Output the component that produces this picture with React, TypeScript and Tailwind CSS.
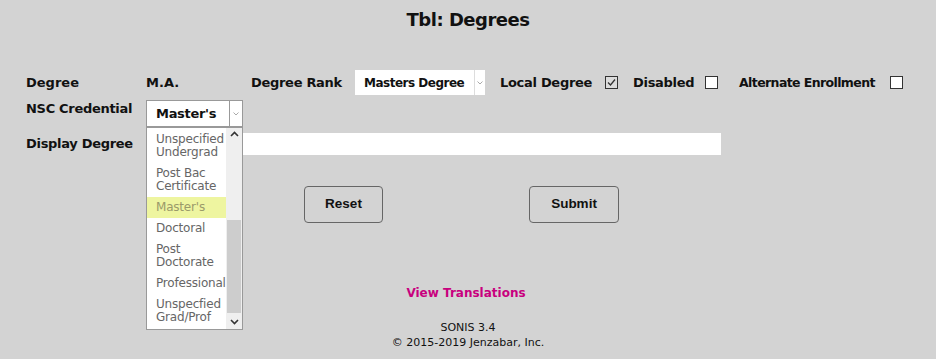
import React from "react";

const font = { fontFamily: '"DejaVu Sans", "Liberation Sans", sans-serif' };

function Check({ checked }: { checked?: boolean }) {
  return (
    <span className={`inline-flex h-[13px] w-[13px] shrink-0 items-center justify-center border border-[#333] ${checked ? "bg-[#dcdcdc]" : "bg-white"}`}>
      {checked && (
        <svg width="11" height="11" viewBox="0 0 11 11">
          <path d="M2 5.5 L4.5 8 L9 2.5" fill="none" stroke="#333" strokeWidth="1.3" />
        </svg>
      )}
    </span>
  );
}

function Chev({ up }: { up?: boolean }) {
  return (
    <svg width="9" height="6" viewBox="0 0 9 6">
      <path d={up ? "M1 5 L4.5 1.5 L8 5" : "M1 1 L4.5 4.5 L8 1"} fill="none" stroke="#333" strokeWidth="1.6" />
    </svg>
  );
}

const items: { t: string[]; hi?: boolean }[] = [
  { t: ["Unspecified", "Undergrad"] },
  { t: ["Post Bac", "Certificate"] },
  { t: ["Master's"], hi: true },
  { t: ["Doctoral"] },
  { t: ["Post", "Doctorate"] },
  { t: ["Professional"] },
  { t: ["Unspecfied", "Grad/Prof"] },
];

export default function App() {
  return (
    <div className="relative h-[359px] w-[936px] overflow-hidden whitespace-nowrap bg-[#d3d3d3] text-[#111]" style={font}>
      <div className="flex h-[37px] items-center justify-center pt-[1px] text-[18px] font-bold tracking-[-0.5px]">Tbl: Degrees</div>

      <div className="mt-[33px] flex h-[25px] items-center text-[13px] font-bold">
        <span className="ml-[26px] w-[120px] shrink-0">Degree</span>
        <span className="w-[105px] shrink-0">M.A.</span>
        <span className="w-[104px] shrink-0 tracking-[-0.3px]">Degree Rank</span>
        <div className="flex h-[25px] w-[130px] shrink-0 items-stretch bg-white">
          <span className="flex flex-1 items-center overflow-hidden pl-[9px] text-[12px] tracking-[-0.5px]">Masters Degree</span>
          <span className="flex w-[11px] items-center justify-center border-l border-[#ddd]">
            <svg width="6" height="4" viewBox="0 0 6 4"><path d="M0.5 0.5 L3 3 L5.5 0.5" fill="none" stroke="#aaa" strokeWidth="1" /></svg>
          </span>
        </div>
        <span className="ml-[15px] w-[105px] shrink-0 tracking-[-0.3px]">Local Degree</span>
        <Check checked />
        <span className="ml-[15px] w-[72px] shrink-0 tracking-[-0.3px]">Disabled</span>
        <Check />
        <span className="ml-[21px] w-[151px] shrink-0 pt-[2px] text-[12.5px] tracking-[-0.6px]">Alternate Enrollment</span>
        <Check />
      </div>

      <div className="mt-[5px] flex h-[27px] text-[13px] font-bold">
        <span className="ml-[26px] w-[120px] shrink-0 pt-[1px] leading-[16px] tracking-[-0.3px]">NSC Credential</span>
        <div className="flex h-[27px] w-[97px] shrink-0 border border-[#999] bg-white">
          <span className="flex flex-1 items-center pl-[9px] pt-[1px] tracking-[-0.3px]">Master's</span>
          <span className="flex w-[13px] items-center justify-center border-l border-[#999]">
            <svg width="6" height="4" viewBox="0 0 6 4"><path d="M0.5 0.5 L3 3 L5.5 0.5" fill="none" stroke="#aaa" strokeWidth="1" /></svg>
          </span>
        </div>
      </div>

      <div className="mt-[6px] flex h-[22px] items-center text-[13px] font-bold">
        <span className="ml-[26px] w-[120px] shrink-0 tracking-[-0.3px]">Display Degree</span>
        <div className="h-[22px] w-[575px] shrink-0 bg-white" />
      </div>

      <div className="mt-[31px] flex h-[37px]" style={{ fontFamily: '"Liberation Sans", Arial, sans-serif' }}>
        <button className="ml-[304px] h-[37px] w-[79px] rounded-[4px] border border-[#666] bg-[#d3d3d3] text-[13.5px] font-bold">Reset</button>
        <button className="ml-[146px] h-[37px] w-[90px] rounded-[4px] border border-[#666] bg-[#d3d3d3] text-[13.5px] font-bold">Submit</button>
      </div>

      <div className="mt-[61px] flex justify-center pr-[4px] text-[12px] font-bold text-[#c8007e]">View Translations</div>

      <div className="mt-[18px] flex flex-col items-center text-[11px] leading-[15px]">
        <span>SONIS 3.4</span>
        <span>© 2015-2019 Jenzabar, Inc.</span>
      </div>

      <div className="absolute left-[146px] top-[127px] flex h-[203px] w-[97px] border border-[#999] bg-white">
        <div className="w-[79px] overflow-hidden pt-[1px] text-[12px] leading-[13.5px] tracking-[-0.2px] text-[#666]">
          {items.map((it, i) => (
            <div
              key={i}
              className={`flex items-center pl-[9px] ${it.t.length > 1 ? "h-[34px]" : "h-[21px]"} ${it.hi ? "bg-[#eef5a0] text-[#9a9a6a]" : ""}`}
            >
              <div>{it.t.map((l, j) => <div key={j}>{l}</div>)}</div>
            </div>
          ))}
        </div>
        <div className="relative w-[16px] bg-[#efefef]">
          <div className="absolute left-0 top-[3px] flex w-[16px] justify-center"><Chev up /></div>
          <div className="absolute left-[1px] top-[92px] h-[93px] w-[14px] bg-[#cdcdcd]" />
          <div className="absolute bottom-[4px] left-0 flex w-[16px] justify-center"><Chev /></div>
        </div>
      </div>
    </div>
  );
}
